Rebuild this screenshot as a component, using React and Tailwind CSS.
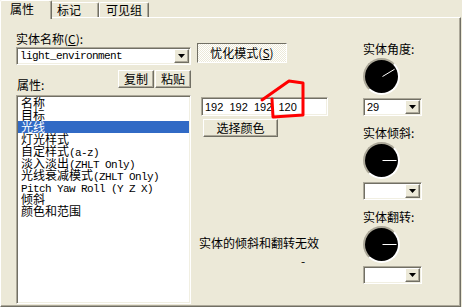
import React from 'react';

const raised = 'border border-t-white border-l-white border-r-[#716f64] border-b-[#716f64] shadow-[inset_-1px_-1px_0_#aca899]';
const sunken = 'border border-t-[#aca899] border-l-[#aca899] border-r-white border-b-white shadow-[inset_1px_1px_0_#716f64,inset_-1px_-1px_0_#f1efe2]';

const M = ({ children }) => (
    <span className="font-['Liberation_Mono',monospace] text-[11px] tracking-[-0.6px]">{children}</span>
);

const DropButton = () => (
    <div className={`w-[15px] h-full flex items-center justify-center bg-[#ece9d8] ${raised}`}>
        <svg width="7" height="4" viewBox="0 0 7 4">
            <path d="M0 0h7L3.5 4z" fill="#000" />
        </svg>
    </div>
);

const Combo = ({ children, className = '' }) => (
    <div className={`h-[18px] bg-white flex p-[1px] ${sunken} ${className}`}>
        <div className="flex-1 flex items-center pl-[2px] overflow-hidden">{children}</div>
        <DropButton />
    </div>
);

const Dial = ({ angle }) => {
    const c = 16.5;
    const r = 15;
    const a = (angle * Math.PI) / 180;
    return (
        <div className="w-[37px] h-[37px] rounded-full border-2 border-t-[#aca899] border-l-[#aca899] border-r-white border-b-white bg-black">
            <svg width="33" height="33" viewBox="0 0 33 33">
                <line x1={c + 1} y1={c} x2={c + r * Math.cos(a)} y2={c - r * Math.sin(a)} stroke="#fff" strokeWidth="1" />
            </svg>
        </div>
    );
};

const listItems = [
    <>名称</>,
    <>目标</>,
    <>光线</>,
    <>灯光样式</>,
    <>自定样式<M>(a-z)</M></>,
    <>淡入淡出<M>(ZHLT Only)</M></>,
    <>光线衰减模式<M>(ZHLT Only)</M></>,
    <M>Pitch Yaw Roll (Y Z X)</M>,
    <>倾斜</>,
    <>颜色和范围</>,
];

const AngleBlock = ({ label, angle, value, first }) => (
    <div className={first ? '' : 'mt-[11px]'}>
        <div className="h-[12px]">{label}</div>
        <div className="mt-[3px]">
            <Dial angle={angle} />
        </div>
        <Combo className="mt-[3px] w-[59px]">
            <span className="font-['Liberation_Sans',sans-serif] text-[11px]">{value}</span>
        </Combo>
    </div>
);

export default function App() {
    return (
        <div className="relative w-[462px] h-[307px] overflow-hidden bg-[#ece9d8] text-black text-[12px] leading-[12px] font-['Noto_Sans_CJK_SC',sans-serif]">
            {/* tabs */}
            <div className="relative z-10 flex h-[17px] items-start">
                <div className="h-[19px] w-[52px] pl-[9px] pt-[2px] bg-[#ece9d8] border-l border-t border-white border-r border-r-[#716f64] rounded-t-[2px] shadow-[inset_-1px_0_0_#aca899]">
                    属性
                </div>
                <div className="mt-[2px] h-[15px] w-[47px] pl-[5px] pt-[1px] border-t border-white border-r border-r-[#716f64] rounded-tr-[2px] shadow-[inset_-1px_0_0_#aca899]">
                    标记
                </div>
                <div className="mt-[2px] h-[15px] w-[50px] pl-[6px] pt-[1px] border-l border-t border-white border-r border-r-[#716f64] rounded-t-[2px] shadow-[inset_-1px_0_0_#aca899]">
                    可见组
                </div>
            </div>

            {/* panel */}
            <div className={`w-[461px] h-[290px] flex ${raised}`}>
                {/* left column */}
                <div className="ml-[15px] w-[175px] pt-[15px] flex flex-col">
                    <div className="h-[12px]">
                        实体名称(<span className="underline">C</span>):
                    </div>
                    <Combo className="mt-[2px] w-full">
                        <M>light_environment</M>
                    </Combo>
                    <div className="mt-[5px] flex h-[18px]">
                        <div className="mt-[9px] ml-[1px]">属性:</div>
                        <div className="ml-auto flex gap-[1px]">
                            <button className={`w-[36px] h-[18px] bg-[#ece9d8] ${raised}`}>复制</button>
                            <button className={`w-[36px] h-[18px] bg-[#ece9d8] ${raised}`}>粘贴</button>
                        </div>
                    </div>
                    <div className={`mt-[7px] h-[209px] bg-white p-[1px] ${sunken}`}>
                        {listItems.map((item, i) => (
                            <div
                                key={i}
                                className={`h-[12px] pl-[3px] whitespace-nowrap ${i === 2 ? 'bg-[#316ac5] text-white' : ''}`}
                            >
                                {item}
                            </div>
                        ))}
                    </div>
                </div>

                {/* middle column */}
                <div className="ml-[6px] w-[131px] pt-[25px] flex flex-col items-start">
                    <div className="w-[90px] h-[20px] flex items-center justify-center border border-t-[#716f64] border-l-[#716f64] border-r-white border-b-white bg-[repeating-conic-gradient(#ffffff_0_25%,#ece9d8_0_50%)] bg-[length:2px_2px]">
                        <span>
                            忧化模式(<span className="underline">S</span>)
                        </span>
                    </div>
                    <div className={`mt-[34px] ml-[4px] w-[127px] h-[19px] bg-white flex items-center pl-[3px] ${sunken}`}>
                        <span className="whitespace-pre font-['Liberation_Sans',sans-serif] text-[11px]">192  192  192  120</span>
                    </div>
                    <button className={`mt-[3px] ml-[6px] w-[75px] h-[18px] bg-[#ece9d8] ${raised}`}>选择颜色</button>
                    <div className="mt-[100px] ml-[2px] whitespace-nowrap">实体的倾斜和翻转无效</div>
                    <div className="mt-[6px] ml-[104px]">-</div>
                </div>

                {/* right column */}
                <div className="ml-[35px] w-[60px] pt-[25px] flex flex-col">
                    <AngleBlock label="实体角度:" angle={29} value="29" first />
                    <AngleBlock label="实体倾斜:" angle={0} value="" />
                    <AngleBlock label="实体翻转:" angle={0} value="" />
                </div>
            </div>

            {/* red hand-drawn mark */}
            <svg className="absolute left-0 top-0 pointer-events-none" width="462" height="307" viewBox="0 0 462 307">
                <polyline
                    points="262,100 289,81 303,83 303,115 273,117 272,99"
                    fill="none"
                    stroke="#ff0000"
                    strokeWidth="3"
                    strokeLinejoin="round"
                    strokeLinecap="round"
                />
            </svg>
        </div>
    );
}
